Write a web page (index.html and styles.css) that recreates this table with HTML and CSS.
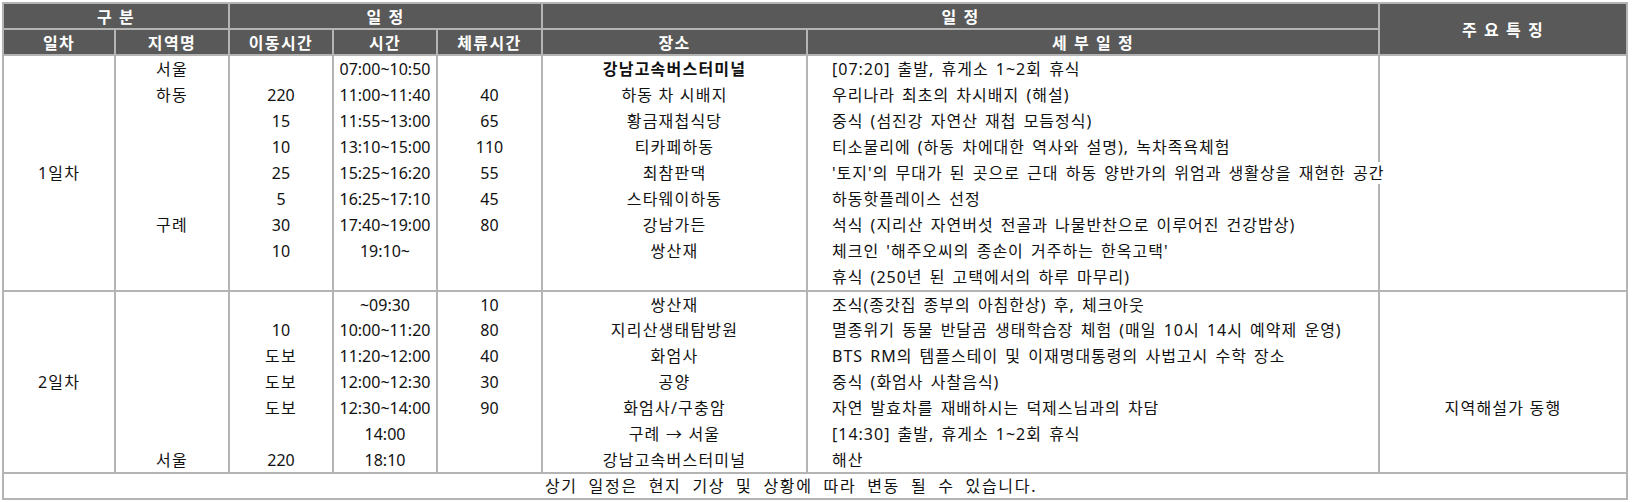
FILE: index.html
```html
<!DOCTYPE html>
<html lang="ko">
<head>
<meta charset="utf-8">
<title>일정표</title>
<link rel="stylesheet" href="styles.css">
</head>
<body>
<div class="wrap">
<table class="sched">
  <colgroup>
    <col class="c-day"><col class="c-region"><col class="c-move"><col class="c-time"><col class="c-stay"><col class="c-place"><col class="c-detail"><col class="c-feat">
  </colgroup>
  <thead>
    <tr>
      <th colspan="2">구 분</th>
      <th colspan="3">일 정</th>
      <th colspan="2">일 정</th>
      <th rowspan="2">주 요 특 징</th>
    </tr>
    <tr>
      <th>일차</th><th>지역명</th><th>이동시간</th><th>시간</th><th>체류시간</th><th>장소</th><th>세 부 일 정</th>
    </tr>
  </thead>
  <tbody>
    <tr>
      <td rowspan="9">1일차</td>
      <td>서울</td><td class="num"></td><td class="num">07:00~10:50</td><td class="num"></td><td class="bold">강남고속버스터미널</td>
      <td class="detail">[07:20] 출발, 휴게소 1~2회 휴식</td>
      <td rowspan="9"></td>
    </tr>
    <tr><td>하동</td><td class="num">220</td><td class="num">11:00~11:40</td><td class="num">40</td><td>하동 차 시배지</td><td class="detail">우리나라 최초의 차시배지 (해설)</td></tr>
    <tr><td></td><td class="num">15</td><td class="num">11:55~13:00</td><td class="num">65</td><td>황금재첩식당</td><td class="detail">중식 (섬진강 자연산 재첩 모듬정식)</td></tr>
    <tr><td></td><td class="num">10</td><td class="num">13:10~15:00</td><td class="num">110</td><td>티카페하동</td><td class="detail">티소물리에 (하동 차에대한 역사와 설명), 녹차족욕체험</td></tr>
    <tr><td></td><td class="num">25</td><td class="num">15:25~16:20</td><td class="num">55</td><td>최참판댁</td><td class="detail"><span class="over">'토지'의 무대가 된 곳으로 근대 하동 양반가의 위엄과 생활상을 재현한 공간</span></td></tr>
    <tr><td></td><td class="num">5</td><td class="num">16:25~17:10</td><td class="num">45</td><td>스타웨이하동</td><td class="detail">하동핫플레이스 선정</td></tr>
    <tr><td>구례</td><td class="num">30</td><td class="num">17:40~19:00</td><td class="num">80</td><td>강남가든</td><td class="detail">석식 (지리산 자연버섯 전골과 나물반찬으로 이루어진 건강밥상)</td></tr>
    <tr><td></td><td class="num">10</td><td class="num">19:10~</td><td class="num"></td><td>쌍산재</td><td class="detail">체크인 '해주오씨의 종손이 거주하는 한옥고택'</td></tr>
    <tr><td></td><td class="num"></td><td class="num"></td><td class="num"></td><td></td><td class="detail">휴식 (250년 된 고택에서의 하루 마무리)</td></tr>

    <tr class="day-start">
      <td rowspan="7">2일차</td>
      <td></td><td class="num"></td><td class="num">~09:30</td><td class="num">10</td><td>쌍산재</td>
      <td class="detail">조식(종갓집 종부의 아침한상) 후, 체크아웃</td>
      <td rowspan="7" class="feat">지역해설가 동행</td>
    </tr>
    <tr><td></td><td class="num">10</td><td class="num">10:00~11:20</td><td class="num">80</td><td>지리산생태탐방원</td><td class="detail">멸종위기 동물 반달곰 생태학습장 체험 (매일 10시 14시 예약제 운영)</td></tr>
    <tr><td></td><td>도보</td><td class="num">11:20~12:00</td><td class="num">40</td><td>화엄사</td><td class="detail">BTS RM의 템플스테이 및 이재명대통령의 사법고시 수학 장소</td></tr>
    <tr><td></td><td>도보</td><td class="num">12:00~12:30</td><td class="num">30</td><td>공양</td><td class="detail">중식 (화엄사 사찰음식)</td></tr>
    <tr><td></td><td>도보</td><td class="num">12:30~14:00</td><td class="num">90</td><td>화엄사/구충암</td><td class="detail">자연 발효차를 재배하시는 덕제스님과의 차담</td></tr>
    <tr><td></td><td class="num"></td><td class="num">14:00</td><td class="num"></td><td>구례 → 서울</td><td class="detail">[14:30] 출발, 휴게소 1~2회 휴식</td></tr>
    <tr class="day-end"><td>서울</td><td class="num">220</td><td class="num">18:10</td><td class="num"></td><td>강남고속버스터미널</td><td class="detail">해산</td></tr>
  </tbody>
  <tfoot>
    <tr><td colspan="8" class="note">상기 일정은 현지 기상 및 상황에 따라 변동 될 수 있습니다.</td></tr>
  </tfoot>
</table>
</div>
</body>
</html>
```

FILE: styles.css
```css
html, body {
  margin: 0;
  padding: 0;
  background: #fff;
}
.wrap {
  padding: 2px 0 0 2px;
}
.sched {
  border-collapse: collapse;
  table-layout: fixed;
  width: 1626px;
  font-family: "Noto Sans", "Noto Sans CJK KR", sans-serif;
  font-size: 16px;
  color: #111;
}
.c-day { width: 112px; }
.c-region { width: 114px; }
.c-move { width: 104px; }
.c-time { width: 104px; }
.c-stay { width: 105px; }
.c-place { width: 265px; }
.c-detail { width: 572px; }
.c-feat { width: 248px; }

.sched th,
.sched td {
  border: 2px solid #b4b4b4;
  padding: 0;
  height: 26px;
  line-height: 22px;
  text-align: center;
  vertical-align: middle;
  white-space: nowrap;
  letter-spacing: 1.2px;
}
.sched th {
  height: 24px;
  background: #595959;
  color: #fff;
  font-weight: 700;
  font-family: "Noto Sans CJK KR", sans-serif;
  letter-spacing: 1.4px;
}
.sched td.num {
  letter-spacing: 0;
}
.sched tbody td {
  border-top: 0;
  border-bottom: 0;
}
.sched tbody tr:first-child td,
.sched tbody tr.day-start td {
  border-top: 2px solid #b4b4b4;
}
.sched tbody tr.day-start td,
.sched tbody tr.day-end td {
  height: 25px;
}
.sched tbody tr:last-child td,
.sched tbody tr:nth-child(9) td,
.sched tbody td[rowspan] {
  border-bottom: 2px solid #b4b4b4;
}
.bold {
  font-weight: 700;
}
.sched td.detail {
  text-align: left;
  padding-left: 24px;
  letter-spacing: 1px;
  word-spacing: 2px;
}
.over {
  background: #fff;
  position: relative;
}
.sched td.feat {
  vertical-align: top;
  padding-top: 103px;
  line-height: 26px;
}
.sched td.note {
  height: 24px;
  padding-right: 48px;
  letter-spacing: 1.7px;
  word-spacing: 5px;
}
```
